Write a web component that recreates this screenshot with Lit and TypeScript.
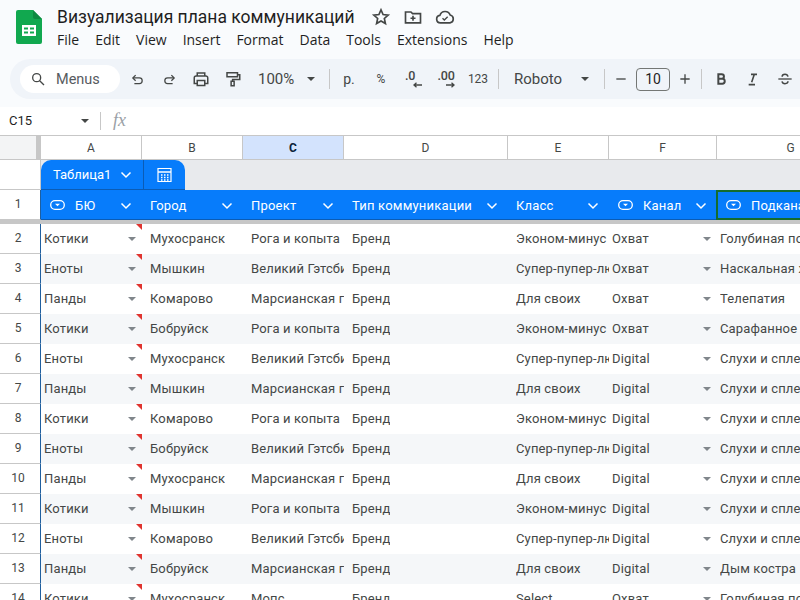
import { LitElement, html, css, svg } from 'lit';
import { customElement } from 'lit/decorators.js';

const MENUS = ['File', 'Edit', 'View', 'Insert', 'Format', 'Data', 'Tools', 'Extensions', 'Help'];

const COLS = [
  { id: 'A', cls: 'narrow', caret: true },
  { id: 'B', cls: '' },
  { id: 'C', cls: '', selected: true },
  { id: 'D', cls: '' },
  { id: 'E', cls: '' },
  { id: 'F', cls: 'narrow', caret: true },
  { id: 'G', cls: 'narrow' },
];

const HEADERS = [
  { label: 'БЮ', chip: true },
  { label: 'Город' },
  { label: 'Проект' },
  { label: 'Тип коммуникации' },
  { label: 'Класс' },
  { label: 'Канал', chip: true },
  { label: 'Подканал', chip: true, active: true },
];

const ROWS = [
  ['Котики', 'Мухосранск', 'Рога и копыта', 'Бренд', 'Эконом-минус', 'Охват', 'Голубиная почта'],
  ['Еноты', 'Мышкин', 'Великий Гэтсби', 'Бренд', 'Супер-пупер-люкс', 'Охват', 'Наскальная живопись'],
  ['Панды', 'Комарово', 'Марсианская гряда', 'Бренд', 'Для своих', 'Охват', 'Телепатия'],
  ['Котики', 'Бобруйск', 'Рога и копыта', 'Бренд', 'Эконом-минус', 'Охват', 'Сарафанное радио'],
  ['Еноты', 'Мухосранск', 'Великий Гэтсби', 'Бренд', 'Супер-пупер-люкс', 'Digital', 'Слухи и сплетни'],
  ['Панды', 'Мышкин', 'Марсианская гряда', 'Бренд', 'Для своих', 'Digital', 'Слухи и сплетни'],
  ['Котики', 'Комарово', 'Рога и копыта', 'Бренд', 'Эконом-минус', 'Digital', 'Слухи и сплетни'],
  ['Еноты', 'Бобруйск', 'Великий Гэтсби', 'Бренд', 'Супер-пупер-люкс', 'Digital', 'Слухи и сплетни'],
  ['Панды', 'Мухосранск', 'Марсианская гряда', 'Бренд', 'Для своих', 'Digital', 'Слухи и сплетни'],
  ['Котики', 'Мышкин', 'Рога и копыта', 'Бренд', 'Эконом-минус', 'Digital', 'Слухи и сплетни'],
  ['Еноты', 'Комарово', 'Великий Гэтсби', 'Бренд', 'Супер-пупер-люкс', 'Digital', 'Слухи и сплетни'],
  ['Панды', 'Бобруйск', 'Марсианская гряда', 'Бренд', 'Для своих', 'Digital', 'Дым костра'],
  ['Котики', 'Мухосранск', 'Мопс', 'Бренд', 'Select', 'Охват', 'Голубиная почта'],
];

const icon = (size: number, body: unknown) => html`<svg width=${size} height=${size} viewBox="0 0 24 24" fill="none" stroke="#444746" stroke-width="2">${body}</svg>`;

const ICONS = {
  star: svg`<path d="M12 3.500l2.500 5.600 6.100.6-4.600 4.100 1.300 6-5.300-3.100-5.300 3.100 1.300-6-4.600-4.100 6.100-.6z"/>`,
  folder: svg`<path d="M3 6V19H21V8H11.500L9.500 6Z"/><path d="M12 10.500v6M9 13.500h6"/>`,
  cloud: svg`<path d="M6.500 19a4.500 4.500 0 0 1-.6-8.960A6.500 6.500 0 0 1 18.200 9.600 4.800 4.800 0 0 1 18 19Z"/><path d="M9 13.500l2.200 2.200 4-4" stroke-width="1.600"/>`,
  search: svg`<circle cx="10" cy="10" r="6"/><path d="M14.500 14.500L21 21"/>`,
  undo: svg`<path d="M5 9.500H15a4.500 4.500 0 0 1 0 9H7"/><path d="M9 5L4.500 9.500 9 14"/>`,
  redo: svg`<path d="M19 9.500H9a4.500 4.500 0 0 0 0 9H17"/><path d="M15 5l4.500 4.500L15 14"/>`,
  print: svg`<path d="M7 8V4H17V8"/><path d="M7 18H3V10.500A2.500 2.500 0 0 1 5.500 8H18.500A2.500 2.500 0 0 1 21 10.500V18H17"/><path d="M7 14H17V20.500H7Z"/>`,
  roller: svg`<path d="M4 3.500H18V9H4Z"/><path d="M18 6.300H21V12.500H11.500V15"/><path d="M9.500 15H13.500V21H9.500Z"/>`,
  minus: svg`<path d="M5 12H19"/>`,
  plus: svg`<path d="M5 12H19M12 5V19"/>`,
  bold: svg`<path stroke-width="3" d="M8 5H13a3.300 3.300 0 0 1 0 6.800H8ZM8 11.800H14a3.600 3.600 0 0 1 0 7.200H8Z"/>`,
  italic: svg`<path stroke-width="2.400" d="M9 5H18M14 5L10 17M5.500 20.500H15"/>`,
  strike: svg`<path d="M2 12H22"/><path stroke-width="2.200" d="M16.500 8.500C16 6 14.500 5 12 5S7.700 6.200 7.700 8.500M7.500 15.500C8 18 9.500 19 12 19S16.500 18 16.500 15.500"/>`,
};

@customElement('app-root')
export class AppRoot extends LitElement {
  static styles = css`
    :host {
      display: block;
      width: 800px;
      height: 600px;
      overflow: hidden;
      background: #f9fbfd;
      font-family: Roboto, "Liberation Sans", sans-serif;
      color: #444746;
    }
    svg { display: block; flex: none; }

    .top {
      height: 59px;
      display: flex;
      padding-left: 16px;
    }
    .logo { margin-top: 10px; }
    .titles { margin-left: 15px; padding-top: 6px; }
    .title-line { display: flex; align-items: center; height: 22px; }
    .title { font-size: 17.5px; color: #1f1f1f; width: 314px; white-space: nowrap; }
    .title-icons { display: flex; gap: 12px; }
    .menu { display: flex; gap: 16px; margin-top: 1px; height: 20px; align-items: center; font-family: "Open Sans", sans-serif; font-size: 14px; color: #1f1f1f; }

    .toolbar {
      height: 40px;
      margin-left: 10px;
      background: #f0f4f9;
      border-radius: 20px 0 0 20px;
      display: flex;
      align-items: center;
      padding-left: 10px;
      font-size: 15px;
      white-space: nowrap;
    }
    .search {
      flex: none;
      width: 100px;
      height: 28px;
      background: #fff;
      border-radius: 14px;
      display: flex;
      align-items: center;
      gap: 10px;
      padding-left: 10px;
      box-sizing: border-box;
      margin-right: 1px;
      color: #575b5f;
      font-size: 14.5px;
    }
    .btn { width: 32px; height: 28px; display: flex; align-items: center; justify-content: center; flex: none; }
    .zoom { flex: none; width: 80px; padding-left: 9px; box-sizing: border-box; display: flex; align-items: center; gap: 13px; }
    .sep { width: 1px; height: 20px; background: #c7c7c7; flex: none; }
    .fmt { font-size: 12px; }
    .fmt.p { font-size: 14px; margin-left: 3px; }
    .dec { font-size: 12.5px; font-weight: 500; line-height: 11px; flex-direction: column; letter-spacing: -.2px; }
    .dec.less { padding-right: 6px; box-sizing: border-box; }
    .dec.less svg { margin: 1px -14px 0 0; }
    .dec.more { margin-left: 1px; }
    .dec.more svg { margin: 1px -8px 0 0; }
    .font { flex: none; width: 105px; padding-left: 15px; box-sizing: border-box; display: flex; align-items: center; gap: 19px; }
    .size {
      flex: none;
      width: 34px;
      height: 23px;
      margin: 0 -1px;
      border: 1px solid #747775;
      border-radius: 4px;
      box-sizing: border-box;
      display: flex;
      align-items: center;
      justify-content: center;
      color: #1f1f1f;
      font-size: 14px;
    }
    .bold { margin-left: 3px; }
    .sep.gap { margin-left: 4px; }
    .caret {
      width: 0;
      height: 0;
      border-left: 4px solid transparent;
      border-right: 4px solid transparent;
      border-top: 4px solid #444746;
      flex: none;
    }

    .formula {
      margin-top: 8px;
      height: 29px;
      box-sizing: border-box;
      background: #fff;
      border-bottom: 1px solid #c7c7c7;
      display: flex;
      align-items: center;
      font-size: 13px;
      color: #1f1f1f;
      padding: 0 0 1px 9px;
    }
    .name { width: 72px; font-size: 13px; }
    .formula .caret { margin-right: 11px; }
    .formula .sep { height: 18px; margin-right: 12px; }
    .fx { font-family: "Liberation Serif", serif; font-style: italic; font-size: 18px; color: #9aa0a6; }

    .sheet { background: #fff; }
    .grid {
      display: grid;
      grid-template-columns: 41px 101px 101px 101px 164px 101px 108px 148px;
    }
    .col-head { height: 24px; }
    .col-head > div {
      box-sizing: border-box;
      border-right: 1px solid #c7c7c7;
      border-bottom: 1px solid #c7c7c7;
      display: flex;
      align-items: center;
      justify-content: center;
      font-size: 12px;
      color: #444746;
      background: #fff;
    }
    .col-head .corner {
      background: #f3f4f5;
      border-right: 5px solid #c7c7c7;
    }
    .col-head .sel { background: #d3e3fd; color: #0b1f3a; font-weight: 700; }

    .band { display: flex; height: 30px; background: #e8eaed; }
    .band-gutter { width: 40px; background: #fff; border-right: 1px solid #c7c7c7; border-bottom: 1px solid #c7c7c7; box-sizing: content-box; height: 29px; }
    .tab {
      width: 144px;
      height: 30px;
      background: #077cfb;
      border-radius: 10px 10px 0 0;
      display: flex;
      color: #fff;
      font-size: 13px;
      border-bottom: 1px solid #0b5cb5;
      box-sizing: border-box;
    }
    .tab-name { width: 103px; padding-left: 12px; box-sizing: border-box; border-right: 1px solid #0b5cb5; display: flex; align-items: center; gap: 9px; }
    .tab-icon { flex: 1; display: flex; align-items: center; justify-content: center; }

    .head-row { height: 30px; }
    .head-row .gut, .body-row .gut {
      background: #fff;
      border-bottom: 1px solid #c7c7c7;
      border-right: 1px solid #1f5f9f;
      box-sizing: border-box;
      display: flex;
      align-items: center;
      justify-content: center;
      font-size: 12px;
      color: #444746;
      padding: 0 4px 2px 0;
    }
    .head-cell {
      background: #077cfb;
      border-bottom: 1px solid #0b5cb5;
      box-sizing: border-box;
      color: #fff;
      font-size: 13px;
      letter-spacing: .2px;
      display: flex;
      align-items: center;
      padding: 1px 0 0 8px;
      white-space: nowrap;
      overflow: hidden;
      position: relative;
    }
    .head-cell.chip { padding-left: 9px; gap: 10px; }
    .head-cell .chev { position: absolute; right: 10px; top: 12px; }
    .head-cell.active { outline: 2px solid #146c2e; outline-offset: -2px; margin-left: -1px; padding-left: 10px; }

    .thick { height: 4px; background: #c7c7c7; }

    .body-row { height: 30px; }
    .body-row.alt .cell { background: #f5f7f9; }
    .cell {
      background: #fff;
      font-size: 13px;
      color: #444746;
      display: flex;
      align-items: center;
      padding: 0 0 2px 8px;
      white-space: nowrap;
      overflow: hidden;
      position: relative;
      box-sizing: border-box;
      letter-spacing: .15px;
    }
    .cell span { overflow: hidden; min-width: 0; }
    .cell.narrow { padding-left: 3px; }
    .cell .pick {
      position: absolute;
      right: 6px;
      top: 13px;
      border-top-color: #80868b;
    }
    .cell .note {
      position: absolute;
      right: 0;
      top: 0;
      width: 0;
      height: 0;
      border-top: 6px solid #e0342f;
      border-left: 6px solid transparent;
    }
  `;

  private chip() {
    return html`<svg width="15" height="10" viewBox="0 0 15 10" fill="none" stroke="#fff" stroke-width="1.300"><rect x=".7" y=".7" width="13.600" height="8.600" rx="4.300"/><path d="M5 3.800h5L7.500 6.300z" fill="#fff" stroke="none"/></svg>`;
  }

  private chevron() {
    return html`<svg class="chev" width="12" height="8" viewBox="0 0 12 8" fill="none" stroke="#fff" stroke-width="1.500"><path d="M1.500 1.500L6 6l4.500-4.500"/></svg>`;
  }

  private renderToolbar() {
    return html`<div class="toolbar">
      <div class="search">${icon(16, ICONS.search)}<span>Menus</span></div>
      <div class="btn">${icon(15, ICONS.undo)}</div>
      <div class="btn">${icon(15, ICONS.redo)}</div>
      <div class="btn">${icon(18, ICONS.print)}</div>
      <div class="btn">${icon(18, ICONS.roller)}</div>
      <div class="zoom"><span>100%</span><i class="caret"></i></div>
      <div class="sep"></div>
      <div class="btn fmt p">р.</div>
      <div class="btn fmt">%</div>
      <div class="btn dec less">.0<svg width="9" height="6" viewBox="0 0 9 6" fill="none" stroke="#444746" stroke-width="1.300"><path d="M9 3H1M3.500 .8L1 3l2.500 2.200"/></svg></div>
      <div class="btn dec more">.00<svg width="9" height="6" viewBox="0 0 9 6" fill="none" stroke="#444746" stroke-width="1.300"><path d="M0 3h8M5.500 .8L8 3 5.500 5.200"/></svg></div>
      <div class="btn fmt">123</div>
      <div class="sep gap"></div>
      <div class="font"><span>Roboto</span><i class="caret"></i></div>
      <div class="sep"></div>
      <div class="btn">${icon(16, ICONS.minus)}</div>
      <div class="size">10</div>
      <div class="btn">${icon(16, ICONS.plus)}</div>
      <div class="sep"></div>
      <div class="btn bold">${icon(16, ICONS.bold)}</div>
      <div class="btn">${icon(16, ICONS.italic)}</div>
      <div class="btn">${icon(16, ICONS.strike)}</div>
    </div>`;
  }

  render() {
    return html`
      <div class="top">
        <svg class="logo" width="26" height="34" viewBox="0 0 26 34">
          <path d="M2 0H17L26 9V32a2 2 0 0 1-2 2H2a2 2 0 0 1-2-2V2a2 2 0 0 1 2-2Z" fill="#11a84f"/>
          <path d="M17 0L26 9H19a2 2 0 0 1-2-2Z" fill="#0c8a40"/>
          <path d="M6 15H20V26H6ZM8 17.500V19.500H12V17.500ZM14 17.500V19.500H18V17.500ZM8 21.500V23.500H12V21.500ZM14 21.500V23.500H18V21.500Z" fill="#fff" fill-rule="evenodd"/>
        </svg>
        <div class="titles">
          <div class="title-line">
            <div class="title">Визуализация плана коммуникаций</div>
            <div class="title-icons">${icon(20, ICONS.star)}${icon(20, ICONS.folder)}${icon(20, ICONS.cloud)}</div>
          </div>
          <div class="menu">${MENUS.map((m) => html`<span>${m}</span>`)}</div>
        </div>
      </div>
      ${this.renderToolbar()}
      <div class="formula">
        <span class="name">C15</span><i class="caret"></i><div class="sep"></div><span class="fx">fx</span>
      </div>
      <div class="sheet">
        <div class="grid col-head">
          <div class="corner"></div>
          ${COLS.map((c) => html`<div class=${c.selected ? 'sel' : ''}>${c.id}</div>`)}
        </div>
        <div class="band">
          <div class="band-gutter"></div>
          <div class="tab">
            <div class="tab-name"><span>Таблица1</span>
              <svg width="12" height="8" viewBox="0 0 12 8" fill="none" stroke="#fff" stroke-width="1.500"><path d="M1.500 1.500L6 6l4.500-4.500"/></svg>
            </div>
            <div class="tab-icon">
              <svg width="17" height="17" viewBox="0 0 17 17" fill="none" stroke="#fff" stroke-width="1.200"><path d="M2 2.500H15V15.500H2Z"/><path d="M2 6H15" stroke-width="1.500"/><path d="M5 9h1.500M8 9h1.500M11 9h1.500M5 11.500h1.500M8 11.500h1.500M11 11.500h1.500M5 14h1.500M8 14h1.500M11 14h1.500" stroke-width="1.400"/></svg>
            </div>
          </div>
        </div>
        <div class="grid head-row">
          <div class="gut">1</div>
          ${HEADERS.map((h) => html`<div class="head-cell ${h.chip ? 'chip' : ''} ${h.active ? 'active' : ''}">
            ${h.chip ? this.chip() : ''}<span>${h.label}</span>${h.active ? '' : this.chevron()}
          </div>`)}
        </div>
        <div class="thick"></div>
        ${ROWS.map((row, i) => html`<div class="grid body-row ${i % 2 ? 'alt' : ''}">
          <div class="gut">${i + 2}</div>
          ${row.map((text, c) => html`<div class="cell ${COLS[c].cls}">
            <span>${text}</span>
            ${COLS[c].caret ? html`<i class="caret pick"></i>` : ''}
            ${c === 0 ? html`<i class="note"></i>` : ''}
          </div>`)}
        </div>`)}
      </div>
    `;
  }
}
